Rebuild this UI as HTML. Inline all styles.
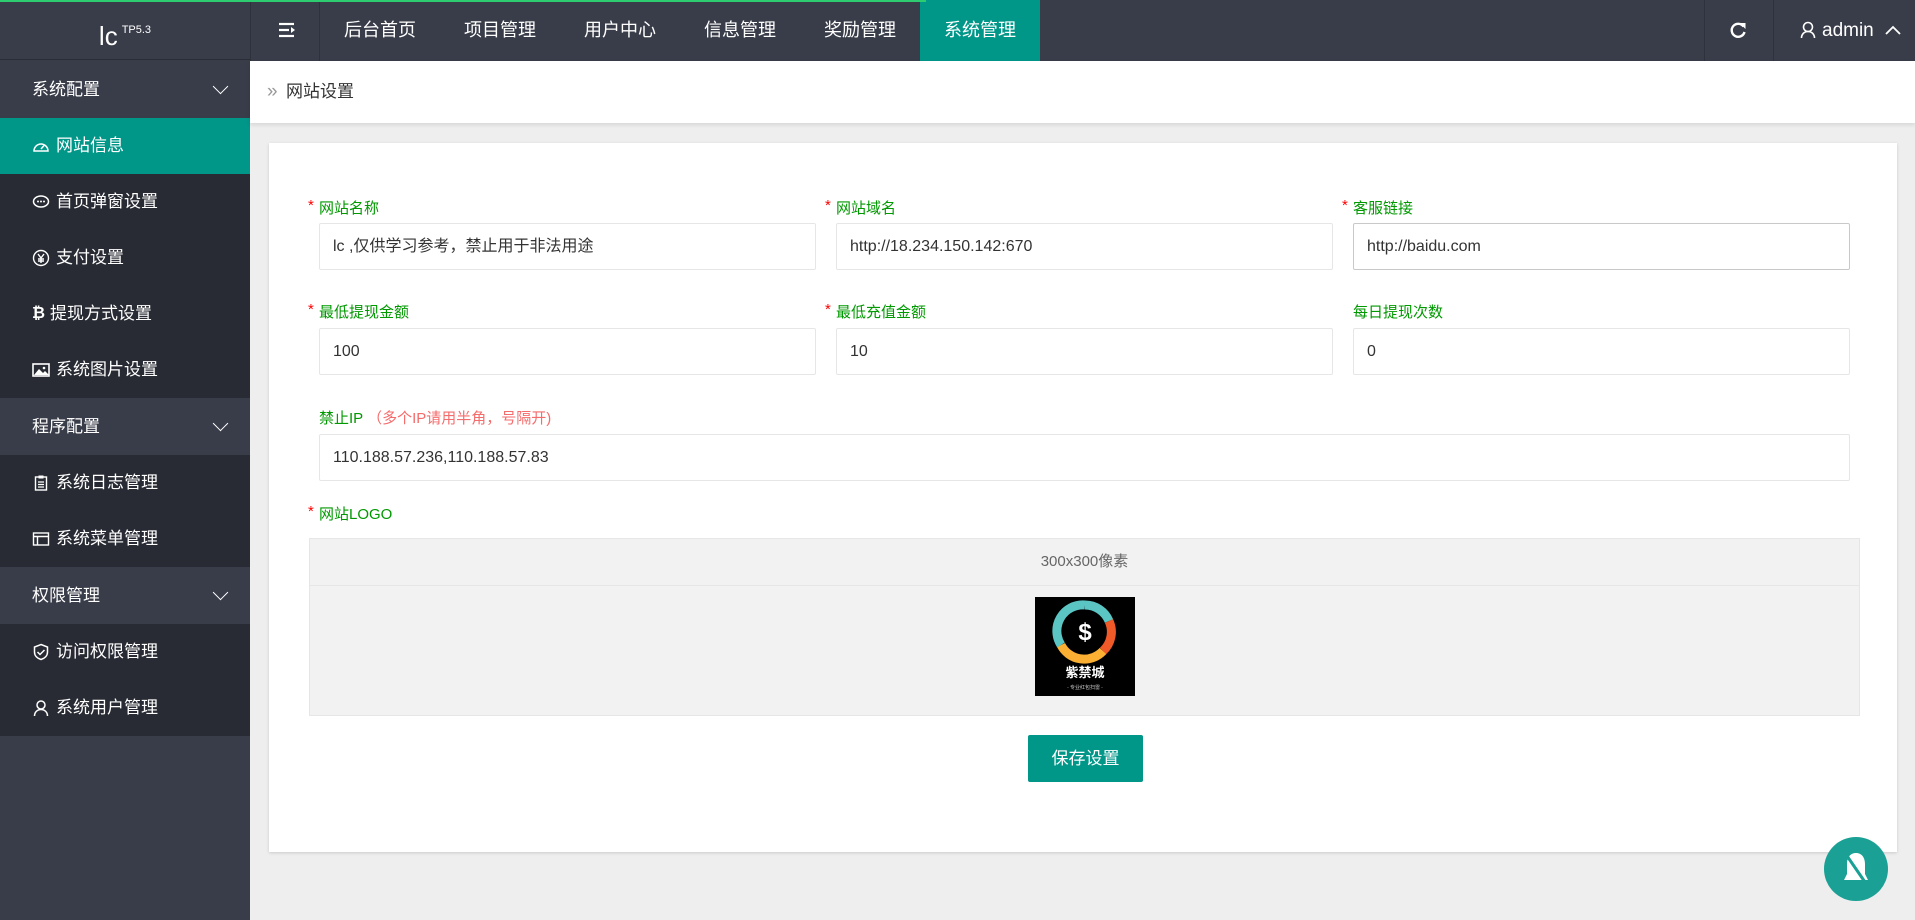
<!DOCTYPE html>
<html><head><meta charset="utf-8"><style>
*{margin:0;padding:0;box-sizing:border-box}
body{width:1915px;height:920px;overflow:hidden;background:#eee;font-family:"Liberation Sans","Noto Sans CJK SC",sans-serif;position:relative}
.top{position:absolute;left:0;top:0;width:1915px;height:61px;background:#393D49;color:#fff}
.prog{position:absolute;left:0;top:0;width:926px;height:2px;background:#2ecc71;z-index:5}
.logo{position:absolute;left:0;top:0;width:250px;height:60px;text-align:center;line-height:60px;font-size:26px;color:#fff;border-bottom:1px solid #2a2d35}
.logo sup{font-size:11px;vertical-align:12px;margin-left:4px}
.ham{position:absolute;left:250px;top:0;width:70px;height:61px;border-left:1px solid #2f323c;border-right:1px solid #2f323c}
.nav{position:absolute;top:0;height:61px;line-height:61px;font-size:18px;text-align:center;width:120px}
.nav.act{background:#009688}
.rsep{position:absolute;top:0;height:61px;width:1px;background:#2f323c}
.side{position:absolute;left:0;top:61px;width:250px;height:859px;background:#393D49}
.grp{height:57px;line-height:57px;color:#fff;font-size:17px;padding-left:32px;background:#393D49;position:relative}
.grp:after{content:"";position:absolute;right:24px;top:20px;width:10px;height:10px;border-right:1.6px solid #fff;border-bottom:1.6px solid #fff;transform:rotate(45deg)}
.it{height:56px;line-height:56px;color:#fff;font-size:17px;padding-left:32px;background:#282B33;display:flex;align-items:center}
.it.act{background:#009688}
.it svg{margin-right:6px}
.bc{position:absolute;left:250px;top:61px;width:1665px;height:62px;background:#fff;box-shadow:0 2px 4px rgba(0,0,0,.1);font-size:17px;color:#333;line-height:62px;padding-left:36px}
.bc span{color:#999;position:absolute;left:17px;font-size:19px}
.card{position:absolute;left:269px;top:143px;width:1628px;height:709px;background:#fff;box-shadow:0 1px 3px rgba(0,0,0,.15)}
.lb{position:absolute;font-size:15px;color:#090;line-height:18px}
.lb i{color:#f00;font-style:normal;position:absolute;left:-11px;top:-3px}
.in{position:absolute;height:47px;border:1px solid #e6e6e6;border-radius:2px;font-size:16px;color:#333;line-height:45px;padding-left:13px;background:#fff}
.up{position:absolute;left:309px;top:538px;width:1551px;height:178px;background:#f2f2f2;border:1px solid #e6e6e6}
.uph{height:47px;border-bottom:1px solid #e6e6e6;text-align:center;line-height:46px;color:#666;font-size:15px}
.btn{position:absolute;left:1028px;top:735px;width:115px;height:47px;background:#009688;color:#fff;font-size:17px;text-align:center;line-height:47px;border-radius:2px}
.fl{position:absolute;left:1824px;top:837px;width:64px;height:64px;border-radius:50%;background:#1aa094}
</style></head><body>
<div class="top">
<div class="prog"></div>
<div class="logo">lc<sup>TP5.3</sup></div>
<div class="ham"><svg width="70" height="61"><g stroke="#fff" stroke-width="2.2"><line x1="28" y1="24" x2="43" y2="24"/><line x1="28" y1="30" x2="38" y2="30"/><line x1="28" y1="36" x2="43" y2="36"/></g><path d="M40 27l4 3-4 3z" fill="#fff"/></svg></div>
<div class="nav" style="left:320px">后台首页</div>
<div class="nav" style="left:440px">项目管理</div>
<div class="nav" style="left:560px">用户中心</div>
<div class="nav" style="left:680px">信息管理</div>
<div class="nav" style="left:800px">奖励管理</div>
<div class="nav act" style="left:920px">系统管理</div>
<div class="rsep" style="left:1704px"></div>
<div class="rsep" style="left:1773px"></div>
<svg style="position:absolute;left:1728px;top:20px" width="20" height="20" viewBox="0 0 20 20"><path d="M15.5 6.5A6.5 6.5 0 1 0 16.5 12" fill="none" stroke="#fff" stroke-width="2.4"/><path d="M11.5 3h6v6z" fill="#fff"/></svg>
<svg style="position:absolute;left:1800px;top:21px" width="16" height="18" viewBox="0 0 16 18"><circle cx="8" cy="6" r="4.5" fill="none" stroke="#fff" stroke-width="1.6"/><path d="M1.5 17c0-4 3-6.5 6.5-6.5s6.5 2.5 6.5 6.5" fill="none" stroke="#fff" stroke-width="1.6"/></svg>
<div style="position:absolute;left:1822px;top:0;line-height:61px;font-size:19px">admin</div>
<svg style="position:absolute;left:1884px;top:24px" width="18" height="12"><path d="M2 10l7-7 7 7" fill="none" stroke="#fff" stroke-width="1.8"/></svg>
</div>
<div class="side">
<div class="grp">系统配置</div>
<div class="it act"><svg width="18" height="18" viewBox="0 0 18 18"><path d="M2 14a7 7 0 1 1 14 0z" fill="none" stroke="#fff" stroke-width="1.5"/><path d="M9 12l3.5-4" stroke="#fff" stroke-width="1.5"/></svg>网站信息</div>
<div class="it"><svg width="18" height="18" viewBox="0 0 18 18"><ellipse cx="9" cy="8.5" rx="7.5" ry="5.5" fill="none" stroke="#fff" stroke-width="1.5"/><circle cx="6" cy="8.5" r="1" fill="#fff"/><circle cx="9" cy="8.5" r="1" fill="#fff"/><circle cx="12" cy="8.5" r="1" fill="#fff"/></svg>首页弹窗设置</div>
<div class="it"><svg width="18" height="18" viewBox="0 0 18 18"><circle cx="9" cy="9" r="7.5" fill="none" stroke="#fff" stroke-width="1.4"/><path d="M6 5l3 4 3-4M9 9v5M6 10h6M6 12h6" fill="none" stroke="#fff" stroke-width="1.4"/></svg>支付设置</div>
<div class="it"><span style="font-weight:bold;font-size:16px;margin-right:6px;width:12px">₿</span>提现方式设置</div>
<div class="it"><svg width="18" height="16" viewBox="0 0 18 16"><rect x="1" y="2" width="16" height="12" fill="none" stroke="#fff" stroke-width="1.6"/><path d="M2 13l5-6 4 4 2-2 4 4z" fill="#fff"/><circle cx="12" cy="6" r="1.3" fill="#fff"/></svg>系统图片设置</div>
<div class="grp">程序配置</div>
<div class="it"><svg width="18" height="18" viewBox="0 0 18 18"><rect x="3.5" y="3" width="11" height="13" fill="none" stroke="#fff" stroke-width="1.4"/><rect x="6.5" y="1.5" width="5" height="3" fill="#fff"/><path d="M6 8h6M6 10.5h6M6 13h6" stroke="#fff" stroke-width="1.2"/></svg>系统日志管理</div>
<div class="it"><svg width="18" height="18" viewBox="0 0 18 18"><rect x="1.5" y="3" width="15" height="12" fill="none" stroke="#fff" stroke-width="1.4"/><path d="M1.5 6.5h15M5.5 6.5v8.5" stroke="#fff" stroke-width="1.4"/></svg>系统菜单管理</div>
<div class="grp">权限管理</div>
<div class="it"><svg width="18" height="18" viewBox="0 0 18 18"><path d="M9 1.5l6.5 2.5v5c0 4-3 6.5-6.5 7.5C5.5 15.5 2.5 13 2.5 9V4z" fill="none" stroke="#fff" stroke-width="1.5"/><path d="M5.5 9l2.5 2.5 4.5-4.5" fill="none" stroke="#fff" stroke-width="1.5"/></svg>访问权限管理</div>
<div class="it"><svg width="18" height="18" viewBox="0 0 18 18"><circle cx="9" cy="6" r="4" fill="none" stroke="#fff" stroke-width="1.5"/><path d="M2.5 17c0-4 3-6.5 6.5-6.5s6.5 2.5 6.5 6.5" fill="none" stroke="#fff" stroke-width="1.5"/></svg>系统用户管理</div>
</div>
<div class="bc"><span>»</span>网站设置</div>
<div class="card"></div>
<div class="lb" style="left:319px;top:200px"><i>*</i>网站名称</div>
<div class="lb" style="left:836px;top:200px"><i>*</i>网站域名</div>
<div class="lb" style="left:1353px;top:200px"><i>*</i>客服链接</div>
<div class="in" style="left:319px;top:223px;width:497px">lc ,仅供学习参考，禁止用于非法用途</div>
<div class="in" style="left:836px;top:223px;width:497px">http://18.234.150.142:670</div>
<div class="in" style="left:1353px;top:223px;width:497px;border-color:#c9c9c9">http://baidu.com</div>
<div class="lb" style="left:319px;top:304px"><i>*</i>最低提现金额</div>
<div class="lb" style="left:836px;top:304px"><i>*</i>最低充值金额</div>
<div class="lb" style="left:1353px;top:304px">每日提现次数</div>
<div class="in" style="left:319px;top:328px;width:497px">100</div>
<div class="in" style="left:836px;top:328px;width:497px">10</div>
<div class="in" style="left:1353px;top:328px;width:497px">0</div>
<div class="lb" style="left:319px;top:410px">禁止IP <span style="color:#f56c6c">（多个IP请用半角，号隔开)</span></div>
<div class="in" style="left:319px;top:434px;width:1531px">110.188.57.236,110.188.57.83</div>
<div class="lb" style="left:319px;top:506px"><i>*</i>网站LOGO</div>
<div class="up"><div class="uph">300x300像素</div></div>
<svg style="position:absolute;left:1035px;top:597px" width="100" height="99" viewBox="0 0 100 99">
<rect width="100" height="99" fill="#000"/>
<path d="M50 8a26 26 0 0 1 24 16" fill="none" stroke="#5bc5c4" stroke-width="9"/>
<path d="M74 24a26 26 0 0 1-6 30" fill="none" stroke="#f05a28" stroke-width="9"/>
<path d="M68 54a26 26 0 0 1-42-6" fill="none" stroke="#fbb034" stroke-width="9"/>
<path d="M26 48a26 26 0 0 1 24-40" fill="none" stroke="#5bc5c4" stroke-width="9"/>
<circle cx="50" cy="34" r="17" fill="#000"/>
<text x="50" y="43" font-size="24" font-weight="bold" fill="#fff" text-anchor="middle" font-family="Liberation Sans">$</text>
<text x="50" y="80" font-size="13" font-weight="bold" fill="#fff" text-anchor="middle" font-family="Noto Sans CJK SC,sans-serif">紫禁城</text>
<text x="50" y="92" font-size="5" fill="#ccc" text-anchor="middle" font-family="Noto Sans CJK SC,sans-serif">- 专业红包扫雷 -</text>
</svg>
<div class="btn">保存设置</div>
<div class="fl"><svg width="64" height="64" viewBox="0 0 64 64"><path d="M32 16c-6 0-9 5-9 11v10l-3 6h24l-3-6V27c0-6-3-11-9-11z" fill="#fff"/><line x1="21" y1="16" x2="43" y2="48" stroke="#1aa094" stroke-width="3"/></svg></div>
</body></html>
